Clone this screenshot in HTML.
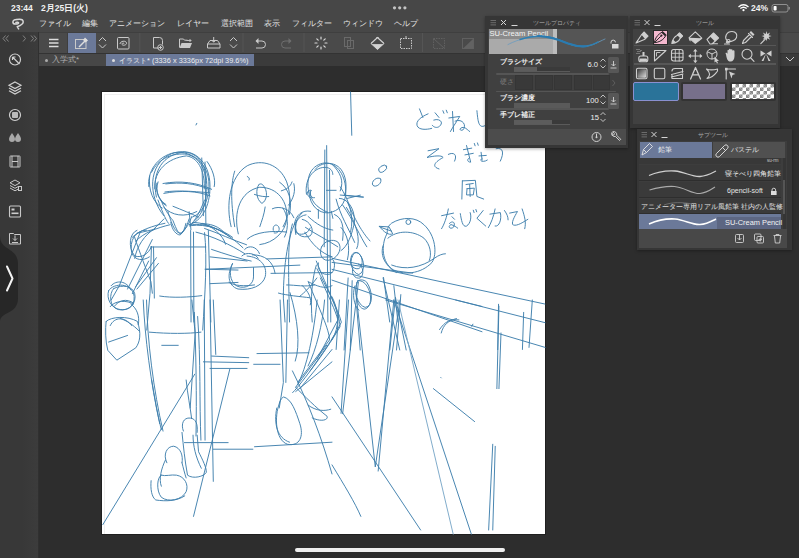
<!DOCTYPE html>
<html><head><meta charset="utf-8">
<style>
*{margin:0;padding:0;box-sizing:border-box}
html,body{width:799px;height:558px;overflow:hidden;background:#2d2d2d;font-family:"Liberation Sans",sans-serif;color:#ddd}
.a{position:absolute}
.t{position:absolute;white-space:nowrap;line-height:1}
svg{position:absolute;overflow:visible}
#sketch path,#sketch circle,#sketch ellipse{vector-effect:non-scaling-stroke}
.tofu .j{letter-spacing:.25em;-webkit-text-stroke:.35px currentColor}
</style></head>
<body>
<!-- top status + menu -->
<div class="a" style="left:0;top:0;width:799px;height:32px;background:#474747"></div>
<div class="t" style="left:11px;top:4px;font-size:8.5px;font-weight:bold;color:#f2f2f2">23:44</div>
<div class="t" style="left:41px;top:4px;font-size:8.5px;font-weight:bold;color:#f2f2f2">2<span class="j">月</span>25<span class="j">日</span>(<span class="j">火</span>)</div>
<svg style="left:0;top:0" width="799" height="32">
 <circle cx="394.5" cy="7.8" r="1.6" fill="#c4c4c4"/><circle cx="399.7" cy="7.8" r="1.6" fill="#c4c4c4"/><circle cx="404.9" cy="7.8" r="1.6" fill="#c4c4c4"/>
 <!-- wifi -->
 <path d="M738.5 7 Q743.5 2.5 748.5 7" stroke="#fff" stroke-width="1.3" fill="none"/>
 <path d="M740.3 8.6 Q743.5 5.8 746.7 8.6" stroke="#fff" stroke-width="1.3" fill="none"/>
 <circle cx="743.5" cy="10.2" r="1.1" fill="#fff"/>
 <!-- battery -->
 <rect x="772" y="4.5" width="16" height="7.5" rx="2" stroke="#999" stroke-width="0.9" fill="none"/>
 <rect x="773.6" y="6" width="3" height="4.5" rx="0.8" fill="#fff"/>
 <path d="M789.2 7 v2.5" stroke="#999" stroke-width="1.2"/>
 <!-- logo -->
 <path d="M18.6 28.9 L17.2 26.7 C19.5 25.8 23.2 24 23.2 21.9 C23.2 20 21.5 19.3 19.5 19.3 C17 19.3 12.9 20 12.9 22 C12.9 23.5 14 24.1 15.5 24.1 C17 24.1 18.6 23.5 18.6 22.8 C18.6 22.2 17 22.2 15.9 22.4" stroke="#d8d8d8" stroke-width="1.5" fill="none" stroke-linecap="round" stroke-linejoin="round"/>
</svg>
<div class="t" style="left:751px;top:4px;font-size:8.5px;font-weight:bold;color:#f2f2f2">24%</div>
<div class="t" style="left:39px;top:20px;font-size:8px;color:#e4e4e4"><span class="j">ファイル</span></div>
<div class="t" style="left:82px;top:20px;font-size:8px;color:#e4e4e4"><span class="j">編集</span></div>
<div class="t" style="left:109px;top:20px;font-size:8px;color:#e4e4e4"><span class="j">アニメーション</span></div>
<div class="t" style="left:177px;top:20px;font-size:8px;color:#e4e4e4"><span class="j">レイヤー</span></div>
<div class="t" style="left:221px;top:20px;font-size:8px;color:#e4e4e4"><span class="j">選択範囲</span></div>
<div class="t" style="left:264px;top:20px;font-size:8px;color:#e4e4e4"><span class="j">表示</span></div>
<div class="t" style="left:292px;top:20px;font-size:8px;color:#e4e4e4"><span class="j">フィルター</span></div>
<div class="t" style="left:343px;top:20px;font-size:8px;color:#e4e4e4"><span class="j">ウィンドウ</span></div>
<div class="t" style="left:394px;top:20px;font-size:8px;color:#e4e4e4"><span class="j">ヘルプ</span></div>

<!-- left sidebar -->
<div class="a" style="left:0;top:32px;width:39px;height:526px;background:#383838"></div>
<div class="a" style="left:22px;top:32px;width:17px;height:526px;background:linear-gradient(90deg,#383838,#3c3c3c)"></div>
<div class="a" style="left:38px;top:32px;width:1px;height:526px;background:#303030"></div>
<svg style="left:0;top:32px" width="39" height="526">
 <g stroke="#8a8a8a" stroke-width="0.9" fill="none">
  <path d="M5.5 3.5 l-2.5 3 l2.5 3 M8.5 3.5 l-2.5 3 l2.5 3"/>
  <path d="M23 3.5 l2.5 3 l-2.5 3"/>
  <path d="M31 3.5 l2.5 3 l-2.5 3 M34 3.5 l2.5 3 l-2.5 3"/>
 </g>
 <g stroke="#d0d0d0" stroke-width="1.2" fill="none">
  <!-- navigator -->
  <circle cx="15" cy="27.5" r="5.5"/>
  <path d="M12.5 25 L18 30.5 M12.5 25 h3 M12.5 25 v3 M17.5 30 l2 2"/>
  <!-- layers -->
  <path d="M15 50 l6 3.3 l-6 3.3 l-6 -3.3 z"/>
  <path d="M9 56 l6 3.3 l6 -3.3 M9 58.7 l6 3.3 l6 -3.3"/>
  <!-- round square -->
  <circle cx="15" cy="83" r="5.5"/>
 </g>
 <rect x="12" y="80" width="6" height="6" rx="1" fill="#bbb"/>
 <!-- drops -->
 <path d="M12 101 q-3 4 -3 6 a3 3 0 0 0 6 0 q0 -2 -3 -6z M18 101 q-3 4 -3 6 a3 3 0 0 0 6 0 q0 -2 -3 -6z" fill="#a8a8a8"/>
 <!-- film -->
 <g stroke="#c8c8c8" stroke-width="1" fill="none">
  <rect x="10" y="124" width="10" height="11" rx="0.5"/>
  <path d="M12 124 v11 M18 124 v11 M12 129.5 h6"/>
 </g>
 <!-- layer property -->
 <g stroke="#c8c8c8" stroke-width="1" fill="none">
  <path d="M15 148 l5 2.8 l-5 2.8 l-5 -2.8 z M10 153.5 l5 2.8 l3 -1.6 M10 156 l5 2.8 l3 -1.6"/>
  <rect x="18.5" y="154.5" width="3" height="4"/>
 </g>
 <!-- panel icon -->
 <g stroke="#c8c8c8" stroke-width="1.1" fill="none"><rect x="9.5" y="174" width="11" height="11" rx="1"/></g>
 <rect x="11.5" y="176.5" width="3" height="2" fill="#ccc"/><rect x="11.5" y="180.5" width="7" height="1.6" fill="#ccc"/>
 <!-- folder download -->
 <g stroke="#c8c8c8" stroke-width="1" fill="none"><path d="M9.5 204 v-2.5 h4 l1 1 h6 v9.5 h-11 z"/><path d="M15 203.5 v5 M13 206.5 l2 2 l2 -2 M12 210.5 h6"/></g>
 <!-- dark tab -->
 <path d="M0 204 C0 219 18 215 18 232 L18 266 C18 283 0 279 0 290 Z" fill="#272727"/>
 <path d="M7 234.5 L12.5 246.5 L7 258.5" stroke="#f4f4f4" stroke-width="2" fill="none" stroke-linecap="round" stroke-linejoin="round"/>
</svg>

<!-- toolbar -->
<div class="a" style="left:39px;top:32px;width:760px;height:21px;background:#4a4a4a"></div>
<div class="a" style="left:39px;top:52.5px;width:760px;height:1.5px;background:#333"></div>
<div class="a" style="left:39px;top:32px;width:760px;height:1px;background:#3f3f3f"></div>
<div class="a" style="left:67px;top:33px;width:1px;height:20px;background:#3e3e3e"></div>
<div class="a" style="left:68px;top:33px;width:28px;height:20px;background:#6b7999"></div>
<svg style="left:0;top:0" width="799" height="60">
 <g stroke="#dcdcdc" stroke-width="1.3" fill="none">
  <path d="M49 39.5 h9.5 M49 43 h9.5 M49 46.5 h9.5"/>
 </g>
 <g stroke="#c9c9c9" stroke-width="1" fill="none">
  <rect x="75.5" y="39.5" width="10.5" height="9"/>
  <path d="M99 41 l3.5 -3.5 l3.5 3.5 M99 44.5 l3.5 3.5 l3.5 -3.5"/>
  <rect x="117.5" y="37.5" width="11.5" height="11.5" rx="1"/>
  <path d="M120 44 c0 -3 6 -4 6.5 -1 c0.5 2 -3.5 3 -4.5 1.5 c-0.8 -1.2 1.5 -2 2.2 -1"/>
 </g>
 <path d="M79 47 L86.5 39.5" stroke="#ddd" stroke-width="1.4"/>
 <path d="M85 37.5 l3 3 l-2.5 2 l-2.5 -2.5z" fill="#ddd"/>
 <g stroke="#555" stroke-width="1"><path d="M139.8 33 v19 M243 33 v19 M304 33 v19 M422.5 33 v19"/></g>
 <g stroke="#c9c9c9" stroke-width="1" fill="none">
  <!-- new doc -->
  <path d="M159 48 h-5.5 v-10.5 h6 q3 0 3 3 v4"/>
  <circle cx="160.5" cy="47.5" r="2.8"/>
  <path d="M159 47.5 h3 M160.5 46 v3"/>
  <!-- tray -->
  <path d="M207.5 44 l2.5 -3.5 h7.5 l2.5 3.5 v4 h-12.5 z M207.5 44 h12.5"/>
  <path d="M213.7 37 v5 M211.5 40 l2.2 2.2 l2.2 -2.2"/>
  <path d="M230 41 l3.5 -3.5 l3.5 3.5 M230 44.5 l3.5 3.5 l3.5 -3.5"/>
  <!-- undo -->
  <path d="M256 41 h6 a3.5 3.5 0 0 1 0 7 h-6"/>
  <!-- dotted rect -->
  <rect x="400.5" y="38.5" width="11" height="10" stroke-dasharray="1.5 1"/>
  <path d="M406 36 v2.5"/>
 </g>
 <!-- folder -->
 <path d="M179.5 47.5 v-8.5 h4 l1 1.2 h3" stroke="#c9c9c9" stroke-width="1" fill="none"/>
 <path d="M179.5 48 l2 -5 h10.5 l-2 5z" fill="#c9c9c9"/>
 <path d="M186.5 40.5 h4.5 M189.5 39 l1.5 1.5 l-1.5 1.5" stroke="#c9c9c9" stroke-width="0.9" fill="none"/>
 <path d="M258.5 38 l-3 3 l3 3z" fill="#c9c9c9"/>
 <!-- redo dim -->
 <g stroke="#6e6e6e" stroke-width="1" fill="none"><path d="M291 41 h-6 a3.5 3.5 0 0 0 0 7 h6"/></g>
 <path d="M288.5 38 l3 3 l-3 3z" fill="#6e6e6e"/>
 <!-- spinner -->
 <g stroke="#d8d8d8" stroke-width="1.2" stroke-linecap="round">
  <path d="M321 37 v2 M321 47 v2 M315 43 h2 M325 43 h2 M316.8 38.8 l1.4 1.4 M323.8 45.8 l1.4 1.4 M316.8 47.2 l1.4 -1.4 M323.8 40.2 l1.4 -1.4"/>
 </g>
 <!-- copy dim -->
 <g stroke="#6a6a6a" stroke-width="1" fill="none"><rect x="344.5" y="37.5" width="6" height="9"/><rect x="347.5" y="40.5" width="6" height="8"/></g>
 <!-- bucket -->
 <path d="M377.5 37 l6.5 6.5 l-6.5 6 l-6.5 -6z" fill="#d2d2d2"/>
 <path d="M371.5 43.5 h12" stroke="#4a4a4a" stroke-width="1.2"/>
 <path d="M377.5 37 l6.5 6.5 l-6.5 6 l-6.5 -6z" fill="none" stroke="#d2d2d2" stroke-width="1"/>
 <rect x="372" y="38" width="11" height="5" fill="#4a4a4a"/>
 <path d="M371.5 43 l6 -5.5 l6 5.5" stroke="#d2d2d2" stroke-width="1.2" fill="none"/>
 <!-- dim icons -->
 <g stroke="#606060" stroke-width="1" fill="none">
  <rect x="433.5" y="38.5" width="11" height="10" stroke-dasharray="1.5 1"/>
  <path d="M433.5 38.5 l11 10"/>
  <rect x="462.5" y="38.5" width="11" height="10"/>
 </g>
 <path d="M473 39 v9.5 h-10z" fill="#626262"/>
</svg>

<!-- tabs -->
<div class="a" style="left:39px;top:54px;width:760px;height:12px;background:#3b3b3b"></div>
<div class="a" style="left:39px;top:54px;width:67px;height:12px;background:#474747"></div>
<div class="a" style="left:106px;top:54px;width:148px;height:12px;background:#6b7999"></div>
<div class="a" style="left:44.5px;top:58.5px;width:3px;height:3px;border-radius:50%;background:#aaa"></div>
<div class="t" style="left:52px;top:56px;font-size:8px;color:#b0b0b0"><span class="j">入学式</span>*</div>
<div class="a" style="left:111.5px;top:58.5px;width:3px;height:3px;border-radius:50%;background:#ddd"></div>
<div class="t" style="left:119px;top:56.5px;font-size:7.4px;color:#eee"><span class="j">イラスト</span>* (3336 x 3336px 72dpi 39.6%)</div>

<!-- canvas -->
<div class="a" style="left:101px;top:91px;width:445px;height:444px;background:#1f1f1f"></div>
<div class="a" style="left:102px;top:92px;width:443px;height:442px;background:#fff"></div>
<div class="a" style="left:104px;top:94px;width:441px;height:440px;border-left:1px solid #f0f0f0;border-top:1px solid #f0f0f0"></div>

<svg style="left:0;top:0" width="799" height="558" id="sketch">
<g fill="none" stroke="#3f80ad" stroke-width="0.95" stroke-linecap="round" vector-effect="non-scaling-stroke">
<g transform="translate(102,92) scale(0.41219)">
 <!-- left figure head -->
 <path d="M150 300 C112 255 110 175 168 150 C220 130 262 168 262 228 C262 280 242 312 212 322"/>
 <path d="M132 255 C118 192 150 150 200 146 C242 148 257 192 254 242 C252 275 240 300 225 312"/>
 <path d="M128 235 C125 190 160 160 205 155 C238 160 250 200 248 235"/>
 <path d="M148 222 C190 214 232 220 266 236"/>
 <path d="M150 246 C190 238 232 240 262 252"/>
 <path d="M136 218 C128 240 138 265 156 276"/>
 <path d="M160 290 C168 318 178 345 192 342 C205 332 212 318 218 302"/>
 <path d="M150 280 C170 300 200 305 230 290"/>
 <path d="M242 160 L246 300"/>
 <path d="M250 170 L252 320"/>
 <!-- left figure torso -->
 <path d="M165 322 C132 330 100 342 82 362"/>
 <path d="M108 335 C80 335 66 362 72 390 C80 410 100 410 115 400"/>
 <path d="M92 342 L42 470 L22 505"/>
 <path d="M122 358 L62 478"/>
 <path d="M132 402 L82 472"/>
 <path d="M118 376 L252 376"/>
 <path d="M125 376 L127 500"/>
 <path d="M215 336 L216 558"/>
 <path d="M222 340 L223 558"/>
 <path d="M258 336 L264 558"/>
 <path d="M140 495 C170 500 212 498 242 494"/>
 <path d="M16 482 C28 462 74 462 78 496 C80 522 60 530 45 528 C22 525 10 502 16 482"/>
 <path d="M22 470 C35 455 60 458 70 480 M30 520 C40 505 60 500 76 512"/>
 <!-- extended arm -->
 <path d="M212 322 C258 316 300 338 342 378"/>
 <path d="M228 340 C270 350 310 370 346 392"/>
 <path d="M240 320 C260 318 285 325 300 345"/>
 <path d="M262 400 L352 410"/>
 <path d="M250 430 L330 432"/>
 <path d="M316 418 C304 440 304 470 330 478 C362 482 390 470 396 448 C402 420 382 400 352 398"/>
 <path d="M346 382 C356 370 376 375 382 392"/>
 <path d="M365 395 C395 395 415 410 420 440"/>
 <path d="M308 462 C320 470 345 472 370 468"/>
 <!-- middle round figure -->
 
 
 
 
 
 
 
 
 
 <!-- railing from fist -->
 <path d="M252 430 L480 420"/>
 <path d="M262 465 L330 462"/>
 <path d="M410 440 L558 438"/>
 <path d="M400 405 L558 400"/>
 <!-- right figure partial -->
 <path d="M496 248 C490 205 520 180 545 183 C558 186 560 195 560 200"/>
 <path d="M505 240 C505 262 518 280 548 292"/>
 <path d="M506 238 C496 238 494 252 506 256"/>
 <path d="M472 312 C452 342 440 420 440 500 L444 558"/>
 <path d="M462 320 C450 360 452 420 455 558"/>
 <path d="M495 298 C475 300 465 320 470 340 C480 350 500 345 505 330"/>
 <path d="M500 302 C522 322 540 332 560 335"/>
 <path d="M545 130 L548 558"/>
 <path d="M552 190 L555 558"/>
 <path d="M492 340 C510 370 530 390 558 400"/>
 <path d="M500 460 C520 470 540 480 558 470"/>
 <path d="M520 420 C510 450 505 500 510 558"/>
 <path d="M228 80 L230 76"/>
</g>

<g transform="translate(400,92) scale(0.25987)">
 <!-- とぶねし -->
 <path d="M75 65 L88 98"/>
 <path d="M108 84 C80 96 60 112 66 130 C72 146 100 146 122 140"/>
 <path d="M135 80 L150 98"/>
 <path d="M130 108 C152 100 170 116 152 132 C142 140 130 136 124 128"/>
 <path d="M165 72 l4 10 M178 70 l4 10"/>
 <path d="M202 75 L206 152"/>
 <path d="M188 100 L230 94 C214 120 200 140 194 152"/>
 <path d="M212 112 C242 100 258 130 242 146 C228 152 226 136 246 136 C256 140 262 148 268 152"/>
 <path d="M296 72 C300 112 302 142 326 130"/>
 <!-- そっぎょう -->
 <path d="M108 226 L150 218 L104 252 C130 246 160 242 166 252 C140 266 116 286 150 296"/>
 <path d="M186 240 C206 230 222 240 210 266"/>
 <path d="M244 222 L276 216 M250 242 L282 236 M256 206 L272 270 C260 270 256 260 266 254 M286 198 l3 9 M298 196 l3 9"/>
 <path d="M312 232 L316 262 M304 246 L332 244 M316 256 C300 266 322 272 336 262"/>
 <path d="M370 218 C396 212 402 232 386 266"/>
 <!-- 風 -->
 <path d="M240 342 L238 412 M240 342 L290 340 L296 402 L322 412 M254 356 L282 352 M258 372 L286 370 L282 396 L256 396 L258 372 M268 356 L270 402"/>
 <!-- なびくかみ -->
 <path d="M160 476 L206 466 M186 450 C180 482 170 510 160 526 M200 480 l10 10 M190 506 C200 494 216 500 206 520 C196 530 180 520 196 510 C210 514 216 520 222 524"/>
 <path d="M232 468 C236 490 240 522 256 516 C272 506 276 480 270 464 M282 455 l3 9 M292 452 l3 9"/>
 <path d="M320 456 L296 486 L330 516"/>
 <path d="M346 470 L386 464 C392 490 382 520 366 516 M366 450 C360 480 350 506 340 522 M402 456 C412 470 416 480 416 492"/>
 <path d="M422 466 L452 460 C440 480 426 506 436 512 C452 516 472 502 492 490 M470 450 C480 480 486 502 480 526"/>
</g>
<g transform="translate(332,200) scale(0.26882)">
 <!-- bird -->
 <path d="M205 125 C186 155 180 222 222 256 C262 282 332 276 372 232 C392 202 386 132 342 92 C312 62 262 62 222 86 C210 95 205 105 205 125"/>
 <path d="M208 142 C242 112 302 112 342 142 C365 165 372 200 362 225"/>
 <path d="M222 242 C272 262 332 252 382 216 C396 206 410 200 422 200"/>
 <path d="M176 98 L212 100 L226 126 C210 132 194 120 176 98 M182 102 L222 116"/>
 <circle cx="284" cy="82" r="9"/>
 <path d="M190 170 C180 200 190 240 240 270"/>
 <!-- railing lines -->
 <path d="M0 217 L792 387"/>
 <path d="M0 232 L300 272"/>
 <path d="M0 258 L558 396"/>
 <path d="M0 298 L558 490"/>
 <!-- figure legs -->
 <path d="M72 210 C60 240 80 260 100 255 C120 245 115 200 90 195 C80 195 75 200 72 210"/>
 <path d="M78 250 C70 275 85 295 105 290 C120 280 118 245 98 238"/>
 <path d="M96 300 C80 330 90 402 120 406 C150 402 152 342 122 310 C112 300 102 300 96 300"/>
 <path d="M85 320 C75 350 80 390 100 410"/>
 <path d="M60 290 L45 558 M75 300 L68 558 M92 400 L105 558"/>
 <path d="M0 360 C20 400 30 450 10 500 L0 520"/>
 <!-- A-shaped verticals -->
 <path d="M190 290 L252 558"/>
 <path d="M215 558 L236 362 L276 558"/>
 <path d="M256 352 L240 558"/>
 <path d="M400 482 C420 452 440 442 472 446"/>
 <path d="M520 470 l4 -8"/>
</g>
<g transform="translate(332,92) scale(0.41219)">
 <path d="M45 0 L48 105"/>
 <ellipse cx="123" cy="186" rx="11" ry="7" transform="rotate(-35 123 186)"/>
 <ellipse cx="108.5" cy="218.5" rx="12" ry="8" transform="rotate(-40 108.5 218.5)"/>
 <path d="M0 175 C20 195 30 215 20 240"/>
 <path d="M20 250 L75 255"/>
 <path d="M10 260 C20 300 40 330 55 365"/>
 <path d="M20 230 C40 260 55 300 45 340"/>
 <path d="M35 280 C60 320 70 360 60 380"/>
 <path d="M404 515 L402 625"/>
 <path d="M125 450 L140 558 M150 470 L160 558"/>
</g>
<g transform="translate(102,300) scale(0.41219)">
 <!-- bag -->
 <path d="M10 52 C22 40 62 38 86 52 C96 82 92 102 82 116 L36 146 L14 122 C8 100 8 70 10 52"/>
 <path d="M20 62 C30 40 56 40 72 62"/>
 <path d="M45 45 C60 50 75 60 90 75"/>
 <path d="M16 102 L62 86"/>
 <path d="M20 16 C32 0 62 0 76 10"/>
 <path d="M70 10 C85 20 92 40 88 60"/>
 <!-- left figure legs -->
 <path d="M108 0 C110 100 125 220 148 318"/>
 <path d="M100 0 C104 90 118 200 140 300"/>
 <path d="M115 78 C160 82 210 82 240 78"/>
 <path d="M145 110 L185 110"/>
 <path d="M218 0 L226 80 L214 262"/>
 <path d="M232 40 C240 150 236 250 240 340"/>
 <path d="M224 30 C228 120 230 240 228 330"/>
 <path d="M248 0 L250 340"/>
 <path d="M262 0 L270 440"/>
 <path d="M270 0 L276 132"/>
 <!-- feet -->
 <!-- perspective -->
 <path d="M2 545 L225 180"/>
 <path d="M222 525 L310 168"/>
 <path d="M266 136 L356 140"/>
 <path d="M246 150 L356 152"/>
 <path d="M262 166 L352 166"/>
 <path d="M376 130 L502 128"/>
 <path d="M368 156 L432 156"/>
 <path d="M200 346 L306 346"/>
 <path d="M270 362 L366 362"/>
 <path d="M370 356 L558 345"/>
 <!-- third figure legs -->
 <path d="M432 0 L440 200 L430 262"/>
 <path d="M450 0 L446 200"/>
 <path d="M522 0 C512 100 492 180 470 212"/>
 <path d="M540 0 C535 60 520 120 500 160"/>
 <path d="M558 150 L470 222"/>
 <path d="M558 120 L480 215"/>
 <path d="M545 110 L475 205"/>
 <path d="M430 252 C418 282 420 340 450 350 C480 356 490 330 480 300 C470 270 460 240 440 235 C435 240 430 245 430 252"/>
 <path d="M424 262 C416 300 425 335 455 345"/>
 <path d="M470 212 C490 232 520 262 546 282 C550 292 530 296 510 286"/>
 <path d="M462 172 C502 252 532 332 558 422"/>
 <path d="M500 255 C520 270 540 270 555 265"/>
</g>
<g transform="translate(332,300) scale(0.41219)">
 <path d="M130 0 L517 115"/>
 <path d="M300 0 L517 55"/>
 <path d="M405 15 L400 215"/>
 <path d="M410 80 L405 215"/>
 <path d="M465 30 L462 120"/>
 <path d="M486 0 L478 115"/>
 <path d="M265 80 C270 60 282 50 302 45"/>
 <path d="M60 0 L105 405 L165 0"/>
 <path d="M150 0 L112 415"/>
 <path d="M40 0 L22 275"/>
 <path d="M18 0 L10 120"/>
 <path d="M0 235 L215 558"/>
 <path d="M150 0 L338 568"/>
 <path d="M160 0 L294 568" stroke="#7aa8c8"/>
 <path d="M246 215 L346 295"/>
 <path d="M390 350 L380 558"/>
 <path d="M396 355 L390 558"/>
 <path d="M0 400 C30 450 55 490 70 525"/>
 <path d="M264 188 l1 1"/>
</g>
<g transform="translate(270,150) scale(0.32258)">
 <path d="M120 130 C110 80 130 45 170 40 C210 40 235 80 235 130 C235 165 215 190 180 195 C150 195 125 175 120 130"/>
 <path d="M140 60 C160 35 200 35 220 60 C235 80 240 110 232 140"/>
 <path d="M128 125 C120 135 125 150 138 148"/>
 <path d="M175 125 L205 125"/>
 <path d="M170 0 L168 300"/>
 <path d="M150 185 L150 212 M190 190 L195 212"/>
 <path d="M100 195 C80 210 75 240 80 262"/>
 <path d="M126 190 C100 185 80 200 75 232"/>
 <path d="M200 200 C225 210 230 240 225 280"/>
 <path d="M80 232 C75 262 100 276 125 266 C140 250 125 220 100 215"/>
 <path d="M110 240 C140 260 180 280 210 300"/>
 <path d="M215 150 C240 150 262 180 262 220 C256 260 240 300 220 312"/>
 <path d="M230 140 L290 146 M240 150 L280 140"/>
 <path d="M225 170 C260 220 280 270 300 300"/>
 <path d="M240 162 C270 230 290 260 310 282"/>
 <path d="M220 240 C240 260 250 300 240 340"/>
 <path d="M160 300 C150 320 160 350 190 340 C215 330 225 300 210 285 C195 275 170 280 160 300"/>
 <path d="M150 350 C145 370 160 390 185 385 C200 380 205 350 195 340"/>
 <path d="M255 330 C245 350 255 380 275 386 C295 380 295 340 275 320 C265 315 258 322 255 330"/>
 <path d="M270 410 C260 440 270 480 295 488 C320 485 320 440 300 410 C290 400 275 400 270 410"/>
 <path d="M100 420 C120 440 130 460 125 480"/>
 <path d="M40 180 C55 200 60 240 45 270"/>
 <path d="M30 100 C60 120 70 160 60 200"/>
</g>
<g transform="translate(102,380) scale(0.27586)">
 <path d="M235 300 C220 270 235 240 260 240 C285 245 295 275 290 300"/>
 <path d="M230 290 C215 320 205 360 215 385"/>
 <path d="M215 345 C200 350 195 400 215 425 C240 445 290 435 305 405 C315 380 300 350 270 345 C250 342 230 350 215 345"/>
 <path d="M178 365 C175 395 180 425 195 435 C230 440 270 440 300 420"/>
 <path d="M290 300 C295 320 300 340 305 355"/>
 <path d="M295 185 C285 160 295 135 320 138 C340 140 348 160 345 190"/>
 <path d="M290 190 C295 240 300 290 310 345 C330 360 370 350 378 335 C380 320 365 290 350 260 L345 200"/>
 <path d="M330 200 C330 240 340 280 360 320"/>
 <path d="M305 0 C310 50 320 100 325 140"/>
 <path d="M180 0 C190 60 200 120 215 180"/>
</g>
<g transform="translate(290,240) scale(0.52632)">
 <path d="M50 40 C70 90 95 140 95 165 C80 190 60 220 45 240 C30 260 15 280 5 290"/>
 <path d="M35 80 C55 130 75 170 75 190 L15 270"/>
 <path d="M0 100 C15 150 20 200 10 230"/>
 <path d="M100 330 L130 80"/>
</g>
<g transform="translate(130,140) scale(0.17921)">
 <path d="M105 260 C95 180 150 90 250 70 C350 60 430 130 440 230 C445 310 420 400 350 430"/>
 <path d="M120 180 C160 100 240 70 320 80 C390 100 420 160 425 240"/>
 <path d="M150 240 C140 260 150 330 200 360"/>
 <path d="M200 245 C280 235 360 240 440 275"/>
 <path d="M195 290 C260 280 340 285 445 295"/>
 <path d="M170 330 C190 380 215 420 240 450 C260 500 270 530 290 520 C310 500 320 470 330 440"/>
 <path d="M240 370 C290 390 340 410 380 430"/>
 <path d="M330 400 L340 500"/>
 <path d="M430 120 C460 160 480 220 470 260"/>
 <path d="M190 440 L130 500 L40 520"/>
 <path d="M350 460 C400 460 470 480 558 540"/>
 <path d="M110 200 C100 280 130 350 180 380"/>
</g>
<g transform="translate(215,155) scale(0.17921)">
 <path d="M90 400 C60 280 80 120 180 60 C260 20 360 50 400 150 C430 230 420 330 380 400"/>
 <path d="M130 440 C100 320 140 200 250 180 C350 180 410 260 400 360 C390 430 330 490 250 500"/>
 <path d="M245 165 C225 190 230 250 262 270 C290 255 300 200 265 165 C258 160 250 160 245 165"/>
 <path d="M220 220 C250 230 280 235 300 232"/>
 <path d="M325 420 C320 395 340 380 355 400 C365 420 350 440 330 435"/>
 <path d="M280 290 C275 330 260 370 250 400"/>
 <path d="M180 470 C220 430 320 420 400 430"/>
 <path d="M320 300 C360 280 420 300 440 350"/>
 <path d="M370 200 C400 190 420 180 430 150"/>
 <path d="M180 120 C190 125 195 130 190 140"/>
 <path d="M410 280 C440 240 450 200 440 160"/>
 <path d="M110 90 C90 150 85 250 110 400"/>
</g>
<g transform="translate(102,200) scale(0.2331)">
 <path d="M240 0 C255 40 270 80 285 100"/>
 <path d="M440 0 C420 50 400 90 375 112"/>
 <path d="M295 95 C300 130 320 150 335 150 C350 140 355 120 360 100"/>
 <path d="M270 100 C220 110 160 130 130 160"/>
 <path d="M230 120 C180 150 150 200 140 250"/>
 <path d="M150 130 C118 142 110 200 140 240 C170 250 200 232 212 200"/>
 <path d="M140 160 C160 220 190 300 210 350 L216 400"/>
 <path d="M212 200 L206 400 L192 558"/>
 <path d="M242 272 L150 382"/>
 <path d="M200 262 L130 402"/>
 <path d="M50 380 C30 400 30 460 70 470 C120 480 150 440 140 400 C130 370 90 360 50 380"/>
 <path d="M440 140 C452 250 442 400 432 558"/>
 <path d="M380 110 C450 100 520 130 560 160"/>
 <path d="M440 122 C500 142 560 172 620 192"/>
 <path d="M470 212 C530 232 590 252 640 262"/>
 <path d="M430 100 C470 110 520 150 530 190"/>
 <path d="M600 240 C620 220 660 230 670 250"/>
 <path d="M560 272 C545 300 545 350 580 370 C620 385 650 360 650 330 L650 290"/>
</g>
<g transform="translate(240,250) scale(0.23298)">
 <path d="M165 185 C200 195 260 200 300 205"/>
 <path d="M200 150 C240 150 280 160 320 150"/>
 <path d="M330 80 C370 160 420 250 435 310 C400 380 350 450 300 520"/>
 <path d="M345 120 C380 200 410 260 420 300 L330 470"/>
 <path d="M255 200 C280 180 300 160 330 120"/>
</g>
</g></svg>
<!-- right chevron area -->
<svg style="left:780px;top:53px" width="19" height="13"><path d="M6 4 l4 4 l4 -4" stroke="#ccc" stroke-width="1" fill="none"/></svg>

<!-- ===== tool property panel ===== -->
<div class="a" style="left:485px;top:16px;width:143px;height:132px;background:#363636;box-shadow:0 1px 3px rgba(0,0,0,0.35)"></div>
<div class="a" style="left:487.5px;top:28.5px;width:138px;height:101px;background:#404040"></div>
<div class="a" style="left:487.5px;top:129px;width:138px;height:15.5px;background:#4c4c4c"></div>
<div class="t" style="left:532.5px;top:19.5px;font-size:6.3px;color:#a8a8a8"><span class="j">ツールプロパティ</span></div>
<svg style="left:0;top:0" width="799" height="260">
 <g stroke="#7a7a7a" stroke-width="0.8"><path d="M490.5 20.5 h5.5 M490.5 22.7 h5.5 M490.5 24.9 h5.5"/></g>
 <g stroke="#d6d6d6" stroke-width="1"><path d="M501 20 l5 5 M506 20 l-5 5 M511.5 25.5 h6"/></g>
</svg>
<!-- preview -->
<div class="a" style="left:489px;top:29px;width:135px;height:25px;background:#555"></div>
<div class="a" style="left:489px;top:29px;width:68px;height:25px;background:#aaaaaa"></div>
<div class="a" style="left:489px;top:29px;width:64px;height:10px;background:#8b8b8b"></div>
<div class="a" style="left:553px;top:29px;width:4px;height:25px;background:#bdbdbd"></div>
<div class="t" style="left:489.5px;top:30px;font-size:7.6px;color:#f4f4f4">SU-Cream Pencil</div>
<svg style="left:0;top:0" width="799" height="260">
 <path d="M508 44.5 C520 38.5 532 35.8 545 36.5 C560 37.5 568 46.5 582 46.5 C592 46.5 598 42 605 39" stroke="#6a9cc0" stroke-width="0.8" fill="none" stroke-linecap="round"/>
 <path d="M520 39.5 C530 36.5 538 35.8 545 36.5 C560 37.5 568 46.5 582 46.5 C590 46.5 594 44 598 42" stroke="#2f80b3" stroke-width="1.4" fill="none" stroke-linecap="round"/>
 <path d="M538 36 C550 36.5 560 40 568 43.5 C575 46 580 46.8 586 46.3" stroke="#2a7bb0" stroke-width="2.1" fill="none" stroke-linecap="round"/>
 <path d="M611 43.5 v-1.2 a2.2 2.2 0 0 1 4.4 0" stroke="#d8d8d8" stroke-width="1" fill="none"/>
 <rect x="612" y="44" width="6.5" height="4.5" fill="#d8d8d8"/>
</svg>
<!-- rows -->
<div class="a" style="left:496px;top:73px;width:113px;height:1.5px;background:#555;border-radius:1px"></div>
<div class="a" style="left:496px;top:90.5px;width:120px;height:1.5px;background:#555;border-radius:1px"></div>
<div class="a" style="left:496px;top:108px;width:113px;height:1.5px;background:#555;border-radius:1px"></div>
<div class="t" style="left:500px;top:57.5px;font-size:7.4px;font-weight:bold;color:#ececec"><span class="j">ブラシサイズ</span></div>
<div class="t" style="left:500px;top:93.5px;font-size:7.4px;font-weight:bold;color:#ececec"><span class="j">ブラシ濃度</span></div>
<div class="t" style="left:500px;top:111px;font-size:7.4px;font-weight:bold;color:#ececec"><span class="j">手ブレ補正</span></div>
<div class="t" style="left:500px;top:79px;font-size:6.8px;color:#7c7c7c"><span class="j">硬さ</span></div>
<div class="t" style="left:587.5px;top:60.5px;font-size:7.6px;color:#f0f0f0">6.0</div>
<div class="t" style="left:586px;top:96.5px;font-size:7.6px;color:#f0f0f0">100</div>
<div class="t" style="left:590.5px;top:114px;font-size:7.6px;color:#f0f0f0">15</div>
<!-- sliders -->
<div class="a" style="left:514px;top:66.5px;width:56px;height:5px;background:#3a3a3a;border-bottom:1px solid #5a5a5a"></div>
<div class="a" style="left:514px;top:66.5px;width:23px;height:4px;background:#5c5c5c"></div>
<div class="a" style="left:514px;top:102.5px;width:56px;height:5px;background:#5a5a5a"></div>
<div class="a" style="left:514px;top:119.5px;width:56px;height:5px;background:#3a3a3a;border-bottom:1px solid #5a5a5a"></div>
<div class="a" style="left:514px;top:119.5px;width:38px;height:4px;background:#5c5c5c"></div>
<!-- hardness boxes -->
<div class="a" style="left:515px;top:75px;width:18px;height:15px;background:#393939;border:1px solid #353535"></div>
<div class="a" style="left:534.5px;top:75px;width:18px;height:15px;background:#393939;border:1px solid #353535"></div>
<div class="a" style="left:554px;top:75px;width:18px;height:15px;background:#393939;border:1px solid #353535"></div>
<div class="a" style="left:573.5px;top:75px;width:18px;height:15px;background:#393939;border:1px solid #353535"></div>
<div class="a" style="left:593px;top:75px;width:17px;height:15px;background:#393939;border:1px solid #353535"></div>
<!-- download buttons -->
<div class="a" style="left:608px;top:57px;width:11px;height:16px;background:#575757;border-radius:1.5px"></div>
<div class="a" style="left:608px;top:93px;width:11px;height:16px;background:#575757;border-radius:1.5px"></div>
<svg style="left:0;top:0" width="799" height="260">
 <g stroke="#d0d0d0" stroke-width="0.9" fill="none">
  <path d="M600.5 61.5 l2.5 -2.5 l2.5 2.5 M600.5 65.5 l2.5 2.5 l2.5 -2.5"/>
  <path d="M600.5 97.5 l2.5 -2.5 l2.5 2.5 M600.5 101.5 l2.5 2.5 l2.5 -2.5"/>
  <path d="M600.5 115 l2.5 -2.5 l2.5 2.5 M600.5 119 l2.5 2.5 l2.5 -2.5"/>
  <path d="M613.5 61 v5 M611.5 64 l2 2 l2 -2 M610.5 68 h6"/>
  <path d="M613.5 97 v5 M611.5 100 l2 2 l2 -2 M610.5 104 h6"/>
 </g>
 <path d="M612.5 80 l2.5 3 l-2.5 3" stroke="#666" stroke-width="0.8" fill="none"/>
 <!-- footer icons -->
 <g stroke="#d0d0d0" stroke-width="1" fill="none">
  <circle cx="596.5" cy="137" r="4.5"/>
  <path d="M596.5 133.5 v3.5"/>
  <path d="M612 132.5 a3 3 0 0 0 3.5 4 l4 4 l1.2 -1.2 l-4 -4 a3 3 0 0 0 -4 -3.5 l1.8 1.8 l-0.8 1.5 l-1.5 0.5z"/>
 </g>
 <circle cx="596.5" cy="137.3" r="1" fill="#d0d0d0"/>
</svg>

<!-- ===== tool panel ===== -->
<div class="a" style="left:630px;top:16px;width:150px;height:112px;background:#363636;box-shadow:0 1px 3px rgba(0,0,0,0.35)"></div>
<div class="a" style="left:632.5px;top:28.5px;width:145px;height:95.5px;background:#414141"></div>
<div class="t" style="left:695.5px;top:19.5px;font-size:6.3px;color:#a8a8a8"><span class="j">ツール</span></div>
<div class="a" style="left:652.5px;top:29.5px;width:15px;height:15px;background:#f5b8cf;border:1px solid #2a2a2a"></div>
<div class="a" style="left:634px;top:44.5px;width:142px;height:1.5px;background:#575757"></div>
<div class="a" style="left:634px;top:63px;width:142px;height:1.5px;background:#575757"></div>
<div class="a" style="left:632.5px;top:82px;width:46px;height:19px;background:#2a7399;border:1.5px solid #8a90d0;border-radius:2px"></div>
<div class="a" style="left:681px;top:82px;width:46px;height:19px;background:#77708b;border:2px solid #333;border-radius:2px"></div>
<div class="a" style="left:730px;top:82px;width:46px;height:19px;border:2px solid #333;border-radius:2px;background-color:#fff;background-image:linear-gradient(45deg,#8a8a8a 25%,transparent 25%,transparent 75%,#8a8a8a 75%),linear-gradient(45deg,#8a8a8a 25%,transparent 25%,transparent 75%,#8a8a8a 75%);background-size:7px 7px;background-position:0 0,3.5px 3.5px"></div>
<svg style="left:0;top:0" width="799" height="260" id="toolicons">
 <defs><linearGradient id="gr" x1="0" y1="0" x2="1" y2="1"><stop offset="0" stop-color="#3a3a3a"/><stop offset="1" stop-color="#e0e0e0"/></linearGradient></defs>
 <g stroke="#cfcfcf" stroke-width="1.1" fill="none" stroke-linejoin="round" stroke-linecap="round">
  <!-- pencil -->
  <path d="M636 43 L641.2 35.2 L644.2 32 L648 36.2 L645 39.2 Z"/>
  <!-- marker -->
  <path d="M671.8 43.5 C672.5 40 674 37 677 35.5 L679.5 33 L682.5 36 L680 38.5 C679 41.5 676 43 671.8 43.5 Z"/>
  <!-- bucket -->
  <path d="M695.3 31.8 L701.8 38.2 L695.3 43.4 L689 37.8 Z"/>
  <!-- eraser -->
  <path d="M707 39.5 L713.5 33 L718.5 38 L712 44 L710 44 Z M711.5 43.8 h6"/>
  <!-- lasso -->
  <path d="M727 40.5 C724 37 726.5 31.5 732 31.5 C736 31.5 737.5 34.5 736.5 37.5 C735.5 40.5 731 42 728 41.5 C726 41 725.5 43 728 42.8 M724.5 44 h5"/>
  <circle cx="728.5" cy="41" r="1.5"/>
  <!-- eyedropper -->
  <path d="M742.5 43.5 L743.5 40.5 L749.5 34.5 L751.5 36.5 L745.5 42.5 Z M748.5 33.5 L752.5 37.5"/>
  <!-- wand -->
  <path d="M760.8 43.6 L766.5 37.8"/>
  <!-- ruler -->
  <path d="M654.5 61 V50.5 H666 Z"/>
  <path d="M656.5 56 V52.5 H660" stroke-width="0.9"/>
  <!-- grid -->
  <rect x="671.5" y="49.5" width="11.5" height="11.5" rx="2.2"/>
  <path d="M675.3 49.5 v11.5 M679.2 49.5 v11.5 M671.5 53.3 h11.5 M671.5 57.2 h11.5" stroke-width="0.9"/>
  <!-- move -->
  <path d="M695.3 50 v12 M689.3 56 h12"/>
  <!-- object -->
  <path d="M707 53 C707 50 709.5 49 712 49 C715 49 717 51 717 54 C717 57 715 59 712 59 C709 59 707 57 707 53 M708 52 L712 54 L716 52 M712 54 V59" stroke-width="1"/>
  <!-- zoom -->
  <circle cx="747" cy="54.2" r="5"/>
  <path d="M750.8 58 L754 61.3"/>
  <!-- row3 -->
  <rect x="636.5" y="68.3" width="10.5" height="10.5" rx="1.5"/>
  <rect x="654.3" y="68.3" width="10.5" height="10.5" rx="1.5"/>
  <path d="M672 71 C672 69 673 68.5 675 68.5 H682.5 V72.5 M672 75 V78.5 H682.5 V75 M671.5 74.5 L683 71.5 M671.5 77 L683 74"/>
  <path d="M690.6 79 L695.5 67.5 L700.5 79 M692.5 74.8 h6" stroke-width="1.3"/>
  <path d="M706.5 69 C709 70 712 70.5 717.5 69 V71 C715 74 714 77 707 78.5 C710 76 711 73 706.5 69 Z"/>
  <path d="M726.2 69 V79 M726.2 69 H735.5"/>
  <!-- airbrush bottle -->
  <rect x="638.8" y="56" width="9" height="5.8" rx="2"/>
 </g>
 <!-- fills -->
 <g fill="#cfcfcf" stroke="none">
  <path d="M641.5 34.8 L644.2 32 L648 36.2 L645 39 Z"/>
  <path d="M636 43 L638.5 41 L637.5 39.8 Z"/>
  <path d="M679.5 32.5 L683 36 L680.5 38.5 L677 35 Z"/>
  <path d="M671.8 43.5 L676 42.5 L673 39.5 Z"/>
  <path d="M689 37.8 L701.8 38.2 L695.3 43.4 Z"/>
  <path d="M689 37.8 C688.5 39.5 689.5 41 690.5 41.5 L691 38.5 Z"/>
  <path d="M713.5 33 L718.5 38 L715 41.5 L710 36.5 Z"/>
  <path d="M749.5 32.5 L751 31 L754.5 34.5 L753 36 Z"/>
  <path d="M766.5 31 l0.8 3 l2.8 -1.5 l-1.5 2.8 l3 0.8 l-3 0.8 l1.5 2.8 l-2.8 -1.5 l-0.8 3 l-0.8 -3 l-2.8 1.5 l1.5 -2.8 l-3 -0.8 l3 -0.8 l-1.5 -2.8 l2.8 1.5 z"/>
  <rect x="639.5" y="58.5" width="7.5" height="2.8" rx="1"/>
  <rect x="642.5" y="52" width="2" height="4"/>
  <circle cx="637" cy="49.5" r="0.5"/><circle cx="639" cy="49.5" r="0.5"/><circle cx="638" cy="51.5" r="0.5"/><circle cx="640" cy="51.5" r="0.5"/><circle cx="637" cy="53.5" r="0.5"/><circle cx="639" cy="53.5" r="0.5"/><circle cx="641" cy="50.5" r="0.5"/>
  <path d="M695.3 49 l2.2 2.5 h-4.4z M695.3 63 l2.2 -2.5 h-4.4z M688.3 56 l2.5 -2.2 v4.4z M702.3 56 l-2.5 -2.2 v4.4z"/>
  <path d="M714.5 56.5 L719 61 L717 61 L718 63 L717 63.5 L716 61.5 L714.5 62.5 Z"/>
  <path d="M726 54.5 C725 53 726 52.5 727 53 L727.5 54 V50.5 C727.5 49.5 729 49.5 729 50.5 V49.5 C729 48.5 730.8 48.5 730.8 49.5 V50 C730.8 49 732.5 49 732.5 50 V51 C732.5 50 734.5 50 734.5 51.2 V56 C734.5 59.5 733 61.5 730.5 61.5 C728 61.5 727 60 726 54.5 Z"/>
  <path d="M760.5 50.5 L765.5 53.5 L760.5 56.5 Z M771.5 50.5 L766.5 53.5 L771.5 56.5 Z M766 53.5 L761.5 61 L763.5 61 Z M766 53.5 L770.5 61 L768.5 61 Z"/>
  <rect x="725" y="67.8" width="2.6" height="2.6"/>
  <path d="M729 71.5 L735.5 74 L732.5 75 L731.5 78.5 Z"/>
 </g>
 <rect x="637.5" y="69.3" width="8.5" height="8.5" rx="1" fill="url(#gr)"/>
 <!-- selected pen (dark) -->
 <g stroke="#262626" stroke-width="1" fill="none" stroke-linejoin="round">
  <path d="M654.3 42.8 C654.8 39.5 656.5 36 659.8 33.6 L662.8 31.6 L666.2 35 L664.2 38 C661.8 40.8 658.5 42.3 654.3 42.8 Z M654.6 42.5 L660.8 36.2"/>
 </g>
 <path d="M661.5 32.8 L662.8 31.6 L666.2 35 L665 36.3 Z" fill="#262626"/>
 <circle cx="661.4" cy="35.6" r="1.1" fill="#262626"/>
</svg>

<!-- ===== sub tool panel ===== -->
<div class="a" style="left:636.5px;top:128.5px;width:155px;height:121.5px;background:#363636;box-shadow:0 1px 3px rgba(0,0,0,0.35)"></div>
<div class="a" style="left:639px;top:141px;width:148px;height:88px;background:#3d3d3d"></div>
<div class="a" style="left:639px;top:229px;width:148px;height:18.5px;background:#484848"></div>
<div class="t" style="left:698px;top:131.5px;font-size:6.3px;color:#a8a8a8"><span class="j">サブツール</span></div>
<div class="a" style="left:640px;top:141.5px;width:72px;height:16px;background:#6b7999"></div>
<div class="a" style="left:713px;top:141.5px;width:72px;height:16px;background:#505050"></div>
<div class="t" style="left:657.5px;top:145.5px;font-size:7.4px;color:#f0f0f0"><span class="j">鉛筆</span></div>
<div class="t" style="left:731px;top:145.5px;font-size:7.4px;color:#e8e8e8"><span class="j">パステル</span></div>
<svg style="left:0;top:0" width="799" height="260">
 <g stroke="#e4e4e4" stroke-width="0.9" fill="none">
  <path d="M642 155 l1.5 -5.5 l6 -6 l3 3 l-6 6 z M643.5 149.5 l3 3"/>
  <path d="M716.5 153.5 l8 -8 a2 2 0 0 1 3 3 l-8 8 a2 2 0 0 1 -3 -3z M722.5 147.5 l3 3"/>
 </g>
</svg>
<!-- list -->
<div class="a" style="left:639px;top:158px;width:142px;height:5.5px;background:#383838"></div>
<div class="a" style="left:639px;top:164.5px;width:142px;height:16.5px;background:#3a3a3a;border-bottom:1px solid #2e2e2e"></div>
<div class="a" style="left:639px;top:182px;width:142px;height:15.5px;background:#3a3a3a;border-bottom:1px solid #2e2e2e"></div>
<div class="a" style="left:639px;top:198.5px;width:142px;height:15px;background:#3a3a3a;border-bottom:1px solid #2e2e2e"></div>
<div class="a" style="left:639px;top:214px;width:142px;height:15px;background:#6b7999"></div>
<div class="a" style="left:717px;top:216.5px;width:64px;height:12px;background:#5c6682"></div>
<div class="a" style="left:782.5px;top:158px;width:3px;height:71px;background:#353535"></div>
<div class="a" style="left:783px;top:180px;width:2px;height:34px;background:#555"></div>
<div class="t" style="left:767px;top:159px;font-size:4.5px;color:#ccc">su-rm</div>
<div class="t" style="left:724.5px;top:170px;font-size:7.2px;color:#eee"><span class="j">寝そべり四角鉛筆</span></div>
<div class="t" style="left:727px;top:187px;font-size:7px;color:#e6e6e6">6pencil-soft</div>
<div class="t" style="left:641px;top:203px;font-size:7px;color:#e6e6e6"><span class="j">アニメーター専用リアル風鉛筆</span> <span class="j">社内の人監修</span></div>
<div class="t" style="left:725px;top:219px;font-size:7.4px;color:#f2f2f2">SU-Cream Pencil</div>
<svg style="left:0;top:0" width="799" height="260">
 
 <path d="M649 175.5 C658 171.5 667 170.5 675 171 C685 172 692 177 700 176.5 C707 176 712 173 716 171" stroke="#cfcfcf" stroke-width="1.3" fill="none"/>
 <path d="M649.5 190 C658 187.5 667 186 674.5 186.5 C685 187.5 692 194 700 193.5 C707 193 711 189.5 715 187" stroke="#aaa" stroke-width="1.1" fill="none"/>
 <path d="M664 205 C672 202 682 202 692 204" stroke="#777" stroke-width="0.8" fill="none"/>
 <path d="M649 224 C658 220 667 218.5 675 219 C685 220 692 225 700 224.5 C707 224 711 221.5 716 219" stroke="#fff" stroke-width="1.6" fill="none"/>
 <path d="M772 191.5 v-1.5 a1.8 1.8 0 0 1 3.6 0 v1.5" stroke="#ddd" stroke-width="0.9" fill="none"/>
 <rect x="771" y="191" width="5.6" height="4" fill="#ddd"/>
 <g stroke="#cfcfcf" stroke-width="0.9" fill="none">
  <rect x="735.5" y="234.5" width="8" height="8" rx="1"/>
  <path d="M739.5 235 v5 M737.5 238 l2 2 l2 -2"/>
  <rect x="754.5" y="234" width="6.5" height="6.5" rx="1"/>
  <rect x="757" y="236.5" width="6.5" height="6.5" rx="1"/>
  <path d="M760.2 238 v3.5 M758.5 239.7 h3.5"/>
  <path d="M773.5 235.5 h8 M776 235.5 v-1 h3 v1 M774.5 236 l0.8 7 h4.4 l0.8 -7"/>
 </g>
</svg>

<svg style="left:0;top:0" width="799" height="260">
 <g stroke="#7a7a7a" stroke-width="0.8"><path d="M634.5 20.5 h5.5 M634.5 22.7 h5.5 M634.5 24.9 h5.5"/></g>
 <g stroke="#d6d6d6" stroke-width="1"><path d="M644.5 20 l5 5 M649.5 20 l-5 5 M654.5 25.5 h6"/></g>
 <g stroke="#7a7a7a" stroke-width="0.8"><path d="M641.5 132.5 h5.5 M641.5 134.7 h5.5 M641.5 136.9 h5.5"/></g>
 <g stroke="#d6d6d6" stroke-width="1"><path d="M651.5 132 l5 5 M656.5 132 l-5 5 M661.5 137.5 h6"/></g>
</svg>
<!-- home bar -->
<div class="a" style="left:295px;top:548px;width:210px;height:4px;border-radius:2px;background:#f0f0f0"></div>
<script>
(function(){var s=document.createElement('span');s.style.cssText='position:absolute;left:0;top:0;font-size:100px;visibility:hidden;white-space:nowrap;font-family:"Liberation Sans",sans-serif';s.textContent='\u30a2\u30a2\u30a2\u30a2';document.body.appendChild(s);var w=s.getBoundingClientRect().width;document.body.removeChild(s);if(w<360){document.body.className+=' tofu';}})();
</script>
</body></html>
